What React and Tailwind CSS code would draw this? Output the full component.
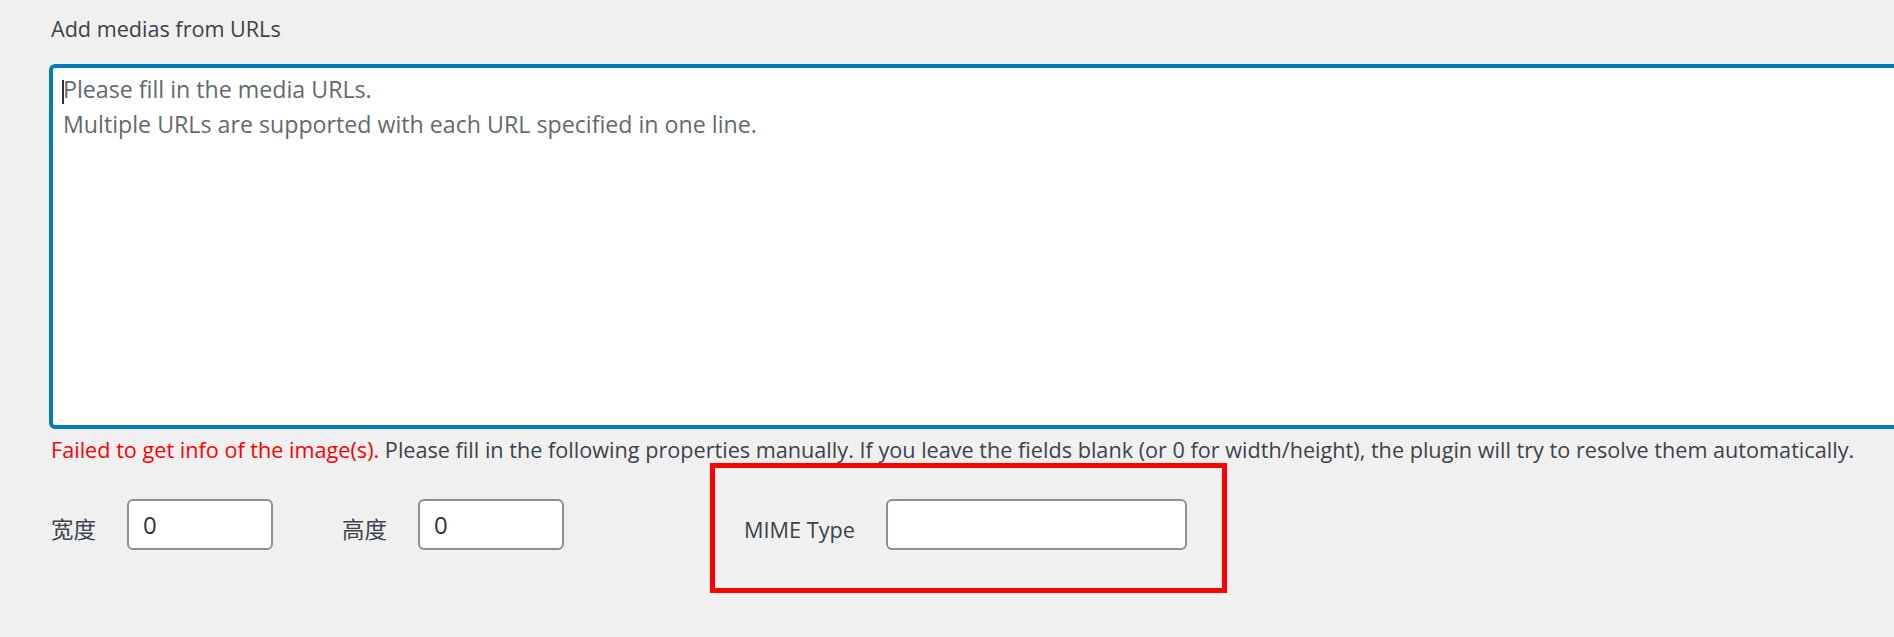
import { useState } from "react";

const fontStack = "font-['Open_Sans','Noto_Sans_CJK_SC',sans-serif]";

function Field({ label, value, onChange, labelClass, inputWidth }) {
  return (
    <div className="flex items-center">
      <span className={`${labelClass} pt-[10px] leading-[30px] text-[#3c434a]`}>{label}</span>
      <input
        type="text"
        value={value}
        onChange={onChange}
        className={`${inputWidth} h-[51px] rounded-[6px] border-2 border-[#8c8f94] bg-white px-[14px] text-[24px] text-[#2c3338] outline-none`}
      />
    </div>
  );
}

export default function App() {
  const [urls, setUrls] = useState("");
  const [width, setWidth] = useState("0");
  const [height, setHeight] = useState("0");
  const [mime, setMime] = useState("");

  return (
    <div className={`h-[637px] w-full overflow-hidden bg-[#f0f0f1] pl-[49px] pt-[14px] text-[#3c434a] ${fontStack}`}>
      <label className="ml-[2px] block text-[21.6px] leading-[30px]">Add medias from URLs</label>

      <div className="relative mt-[20px] w-[1900px]">
        <textarea
          value={urls}
          onChange={(event) => setUrls(event.target.value)}
          placeholder={"Please fill in the media URLs.\nMultiple URLs are supported with each URL specified in one line."}
          className="block h-[365px] w-full resize-none rounded-[6px] border-4 border-[#007cba] bg-white px-[10px] py-[4px] text-[23.2px] leading-[35px] text-[#2c3338] outline-none placeholder:text-[#646970]"
        />
        {/* text caret */}
        {urls === "" ? <span className="absolute left-[13px] top-[16px] h-[24px] w-[2px] bg-[#2c3338]" /> : null}
      </div>

      <p className="ml-[2px] mt-[8px] text-[21.65px] leading-[26px]">
        <span className="text-[#ff0000]">Failed to get info of the image(s).</span> Please fill in the following
        properties manually. If you leave the fields blank (or 0 for width/height), the plugin will try to resolve
        them automatically.
      </p>

      <div className="flex items-start pl-[2px]">
        <div className="mt-[36px]">
          <Field
            label="宽度"
            value={width}
            onChange={(event) => setWidth(event.target.value)}
            labelClass="w-[76px] text-[22.5px]"
            inputWidth="w-[146px]"
          />
        </div>
        <div className="ml-[69px] mt-[36px]">
          <Field
            label="高度"
            value={height}
            onChange={(event) => setHeight(event.target.value)}
            labelClass="w-[76px] text-[22.5px]"
            inputWidth="w-[146px]"
          />
        </div>
        <div className="ml-[146px] h-[130px] w-[517px] border-[5px] border-[#ff0000] pl-[29px] pt-[31px]">
          <Field
            label="MIME Type"
            value={mime}
            onChange={(event) => setMime(event.target.value)}
            labelClass="w-[142px] text-[21.7px]"
            inputWidth="w-[301px]"
          />
        </div>
      </div>
    </div>
  );
}
